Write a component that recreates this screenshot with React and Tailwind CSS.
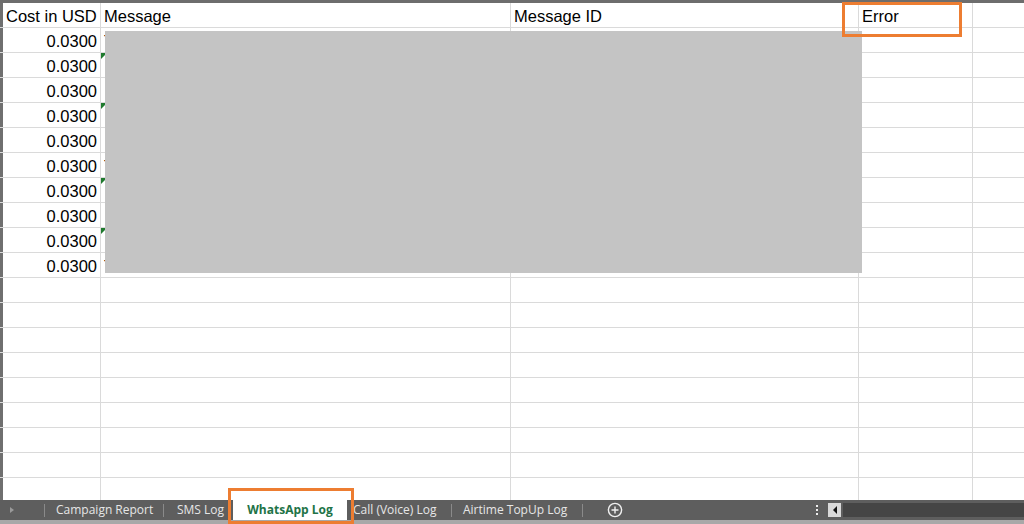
import React from 'react';

const widths = ['w-[98px]', 'w-[410px]', 'w-[348px]', 'w-[114px]'];
const flagged = [1, 3, 6, 8];
const peek = [0, 5, 9];

const Row = ({ cells, header, index }) => (
  <div className="flex h-[25px] shrink-0 border-b border-[#dadada]">
    <div className="w-[3px] bg-[#6f6f6f] shrink-0" />
    {widths.map((w, i) => (
      <div
        key={i}
        className={`${w} shrink-0 border-r border-[#dadada] relative flex items-center pt-[3px] overflow-hidden ${
          i === 0 && !header ? 'justify-end pr-[3px]' : 'pl-[3px]'
        }`}
      >
        {i === 1 && flagged.includes(index) && (
          <span className="absolute left-0 top-0 w-0 h-0 border-t-[6px] border-t-[#1f7a2e] border-r-[6px] border-r-transparent" />
        )}
        <span className="whitespace-nowrap">{cells[i]}</span>
      </div>
    ))}
    <div className="flex-1" />
  </div>
);

const Sep = () => <div className="w-px h-[13px] bg-[#8a8a8a] shrink-0" />;

export default function App() {
  const dataRows = Array.from({ length: 10 }, (_, i) => ['0.0300', peek.includes(i) ? 'T' : '', '', '']);
  const empty = Array.from({ length: 9 }, () => ['', '', '', '']);

  return (
    <div className="w-[1024px] h-[524px] overflow-hidden bg-white relative text-black" style={{ fontFamily: '"Liberation Sans", Arial, sans-serif' }}>
      <div className="h-[500px] overflow-hidden flex flex-col">
        <div className="h-[3px] bg-[#6d6d6d] shrink-0" />
        <div className="text-[16.5px] leading-none flex flex-col">
          <Row header cells={['Cost in USD', 'Message', 'Message ID', 'Error']} index={-1} />
          {dataRows.map((c, i) => (
            <Row key={i} cells={c} index={i} />
          ))}
          {empty.map((c, i) => (
            <Row key={'e' + i} cells={c} index={-1} />
          ))}
        </div>
      </div>

      {/* sheet tabs */}
      <div className="h-[24px] flex flex-col" style={{ fontFamily: '"Open Sans", "Noto Sans", sans-serif' }}>
        <div className="h-[20px] bg-[#5e5e5e] flex items-center text-[12px] text-[#e6e6e6]">
          <div className="w-[44px] flex items-center pl-[10px]">
            <span className="w-0 h-0 border-y-[3px] border-y-transparent border-l-[4px] border-l-[#9a9a9a]" />
          </div>
          <Sep />
          <div className="w-[118px] pl-[11px] whitespace-nowrap">Campaign Report</div>
          <Sep />
          <div className="w-[69px] pl-[13px] whitespace-nowrap overflow-hidden">SMS Log</div>
          <div className="w-[114px] h-full bg-white text-[#217346] font-bold flex items-center justify-center">WhatsApp Log</div>
          <div className="w-[104px] pl-[6px] whitespace-nowrap">Call (Voice) Log</div>
          <Sep />
          <div className="w-[130px] pl-[11px] whitespace-nowrap">Airtime TopUp Log</div>
          <Sep />
          <div className="w-[64px] flex justify-center">
            <svg width="16" height="16" viewBox="0 0 16 16" fill="none" stroke="#f0f0f0" strokeWidth="1.4">
              <circle cx="8" cy="8" r="6.6" />
              <path d="M8 4.5v7M4.5 8h7" />
            </svg>
          </div>
          <div className="flex-1" />
          <div className="flex flex-col gap-[2px] mr-[10px]">
            <span className="w-[2px] h-[2px] bg-[#eeeeee]" />
            <span className="w-[2px] h-[2px] bg-[#eeeeee]" />
            <span className="w-[2px] h-[2px] bg-[#eeeeee]" />
          </div>
          <div className="w-[13px] h-[14px] bg-[#d9d9d9] flex items-center justify-center mr-[2px]">
            <span className="w-0 h-0 border-y-[4px] border-y-transparent border-r-[4px] border-r-[#111]" />
          </div>
          <div className="w-[181px] h-[14px] bg-[#454545]" />
        </div>
        <div className="h-[4px] bg-[#a8a8a8]" />
      </div>

      {/* redaction block */}
      <div className="absolute left-[105px] top-[31px] w-[757px] h-[242px] bg-[#c4c4c4]" />

      {/* highlights */}
      <div className="absolute left-[842px] top-[2px] w-[120px] h-[35px] border-[3px] border-[#ed7d31]" />
      <div className="absolute left-[228px] top-[488px] w-[126px] h-[36px] border-[3px] border-[#ed7d31]" />
    </div>
  );
}
